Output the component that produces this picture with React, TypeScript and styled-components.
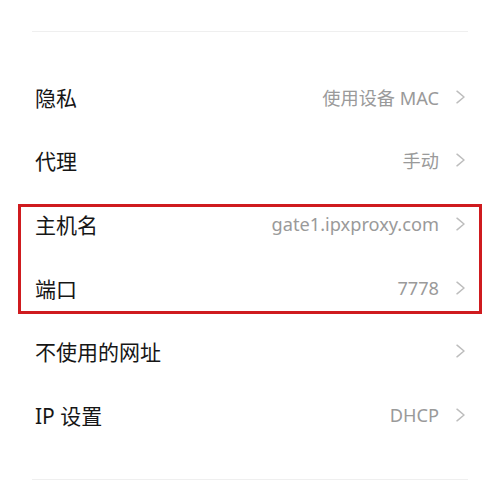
import React from 'react';
import styled, { createGlobalStyle } from 'styled-components';

const GlobalStyle = createGlobalStyle`
  html, body {
    margin: 0;
    padding: 0;
    background: #ffffff;
  }
  body {
    font-family: 'Noto Sans', 'Noto Sans CJK SC', sans-serif;
    -webkit-font-smoothing: antialiased;
  }
`;

const Page = styled.div`
  width: 500px;
  height: 500px;
  padding-top: 31px;
  box-sizing: border-box;
  background: #ffffff;
`;

const Divider = styled.div`
  height: 1px;
  margin: 0 32px;
  background: #efefef;
`;

const List = styled.div`
  display: flex;
  flex-direction: column;
  padding: 33px 0 32px;
`;

const Highlight = styled.div`
  position: relative;

  &::after {
    content: '';
    position: absolute;
    top: 11.8px;
    bottom: 5.4px;
    left: 18px;
    right: 18px;
    border: 3px solid #cf1b1f;
    pointer-events: none;
  }
`;

const Row = styled.div`
  display: flex;
  align-items: center;
  height: 63.6px;
  padding: 0 34px 0 35px;
`;

const Label = styled.span`
  flex: 1;
  font-family: 'Noto Sans', 'Noto Sans CJK SC', sans-serif;
  font-size: 21px;
  color: #161616;
`;

const Value = styled.span`
  font-family: 'Noto Sans', 'Noto Sans CJK SC', sans-serif;
  font-size: 18.2px;
  color: #9a9a9a;
  margin-right: 16px;
`;

const Chevron = () => (
  <svg width="11" height="14" viewBox="0 0 11 14" fill="none">
    <path d="M2 1.2l7 5.8-7 5.8" stroke="#bdbdbd" strokeWidth="1.5" strokeLinecap="round" strokeLinejoin="round" />
  </svg>
);

interface SettingProps {
  label: string;
  value?: string;
}

const Setting: React.FC<SettingProps> = ({ label, value }) => (
  <Row>
    <Label>{label}</Label>
    {value && <Value>{value}</Value>}
    <Chevron />
  </Row>
);

export default function App() {
  return (
    <Page>
      <GlobalStyle />
      <Divider />
      <List>
        <Setting label="隐私" value="使用设备 MAC" />
        <Setting label="代理" value="手动" />
        <Highlight>
          <Setting label="主机名" value="gate1.ipxproxy.com" />
          <Setting label="端口" value="7778" />
        </Highlight>
        <Setting label="不使用的网址" />
        <Setting label="IP 设置" value="DHCP" />
      </List>
      <Divider />
    </Page>
  );
}
